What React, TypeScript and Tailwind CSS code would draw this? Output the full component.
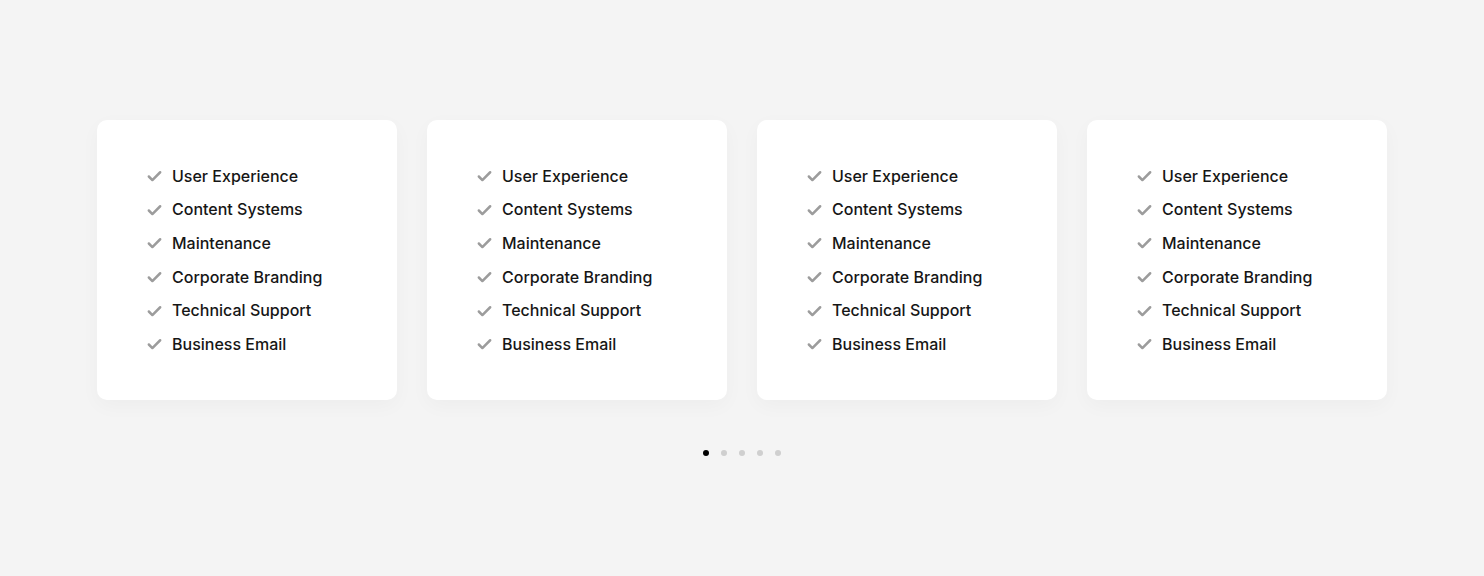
import { Check } from "lucide-react";

const features = [
  "User Experience",
  "Content Systems",
  "Maintenance",
  "Corporate Branding",
  "Technical Support",
  "Business Email",
];

function PlanCard() {
  return (
    <div className="w-[300px] h-[280px] bg-white rounded-[10px] shadow-[0_6px_20px_rgba(0,0,0,0.03)] pl-[49px] pt-[39px]">
      <ul className="flex flex-col">
        {features.map(f => (
          <li key={f} className="flex items-center h-[33.6px] text-[16px] font-medium text-[#161616]">
            <Check className="w-[17px] h-[17px] text-[#9c9c9c] mr-[9px] mt-[2px]" strokeWidth={3.5} />
            <span>{f}</span>
          </li>
        ))}
      </ul>
    </div>
  );
}

export default function App() {
  return (
    <div className="min-h-[576px] w-full bg-[#f4f4f4] pt-[120px] flex flex-col items-center" style={{ fontFamily: "Inter, 'Noto Sans', sans-serif" }}>
      <div className="flex gap-[30px]">
        <PlanCard />
        <PlanCard />
        <PlanCard />
        <PlanCard />
      </div>
      <div className="flex gap-[12px] mt-[50px]">
        <span className="w-[6px] h-[6px] rounded-full bg-black" />
        <span className="w-[6px] h-[6px] rounded-full bg-[#cfcfcf]" />
        <span className="w-[6px] h-[6px] rounded-full bg-[#cfcfcf]" />
        <span className="w-[6px] h-[6px] rounded-full bg-[#cfcfcf]" />
        <span className="w-[6px] h-[6px] rounded-full bg-[#cfcfcf]" />
      </div>
    </div>
  );
}
